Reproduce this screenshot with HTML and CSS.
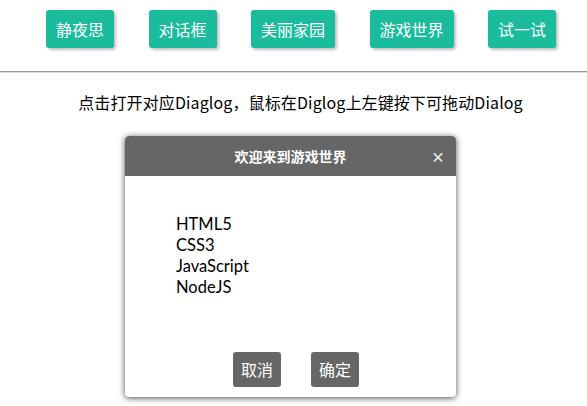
FILE: index.html
```html
<!DOCTYPE html>
<html lang="zh-CN">
<head>
<meta charset="utf-8">
<title>Dialog</title>
<link rel="stylesheet" href="styles.css">
</head>
<body>
<nav class="nav">
  <button class="btn">静夜思</button>
  <button class="btn">对话框</button>
  <button class="btn">美丽家园</button>
  <button class="btn">游戏世界</button>
  <button class="btn">试一试</button>
</nav>
<div class="rule"></div>
<p class="tip">点击打开对应Diaglog，鼠标在Diglog上左键按下可拖动Dialog</p>

<div class="dialog">
  <div class="dialog-head">
    <span class="dialog-title">欢迎来到游戏世界</span>
    <span class="dialog-close">×</span>
  </div>
  <div class="dialog-body">
    <ul class="list">
      <li>HTML5</li>
      <li>CSS3</li>
      <li>JavaScript</li>
      <li>NodeJS</li>
    </ul>
  </div>
  <div class="dialog-foot">
    <button class="dbtn">取消</button>
    <button class="dbtn">确定</button>
  </div>
</div>
</body>
</html>
```

FILE: styles.css
```css
html, body {
  margin: 0;
  padding: 0;
  background: #fff;
}
body {
  font-family: "Noto Sans CJK SC", "Noto Sans", sans-serif;
  color: #000;
  position: relative;
  width: 587px;
  height: 406px;
  overflow: hidden;
}
.nav {
  display: flex;
  gap: 34.5px;
  padding: 10px 0 0 46px;
  height: 38px;
}
.btn {
  height: 38px;
  padding: 0 10px;
  border: none;
  border-radius: 3px;
  background: #1abc9c;
  color: #fff;
  font-family: inherit;
  font-size: 16px;
  line-height: 38px;
  box-shadow: 2px 2px 3px rgba(0,0,0,0.25);
}
.rule {
  margin-top: 23px;
  height: 1px;
  background: #999;
  border-bottom: 1px solid #ddd;
}
.tip {
  margin: 17px 0 0;
  padding-left: 14px;
  text-align: center;
  font-size: 16px;
  line-height: 24px;
  letter-spacing: 0.12px;
}
.dialog {
  position: absolute;
  left: 125px;
  top: 136px;
  width: 331px;
  height: 261px;
  background: #fff;
  border-radius: 4px;
  box-shadow: 0 1px 6px rgba(0,0,0,0.7);
  display: flex;
  flex-direction: column;
  overflow: hidden;
}
.dialog-head {
  height: 40px;
  background: #666;
  color: #fff;
  display: flex;
  align-items: center;
  justify-content: center;
  position: relative;
  border-radius: 4px 4px 0 0;
}
.dialog-title {
  font-size: 14px;
  font-weight: bold;
}
.dialog-close {
  position: absolute;
  right: 11px;
  top: 10px;
  font-size: 14px;
  font-weight: bold;
  line-height: 20px;
  color: #eee;
}
.dialog-body {
  flex: 1;
  padding-top: 38px;
}
.list {
  list-style: none;
  margin: 0;
  padding-left: 51px;
  font-family: Lato, "Noto Sans", sans-serif;
  font-size: 16.5px;
  line-height: 21px;
}
.dialog-foot {
  display: flex;
  justify-content: center;
  gap: 30px;
  padding: 0 0 10px 11px;
}
.dbtn {
  width: 48px;
  height: 35px;
  padding: 0;
  border: none;
  border-radius: 3px;
  background: #666;
  color: #fff;
  font-family: inherit;
  font-size: 16px;
  line-height: 35px;
}
```
